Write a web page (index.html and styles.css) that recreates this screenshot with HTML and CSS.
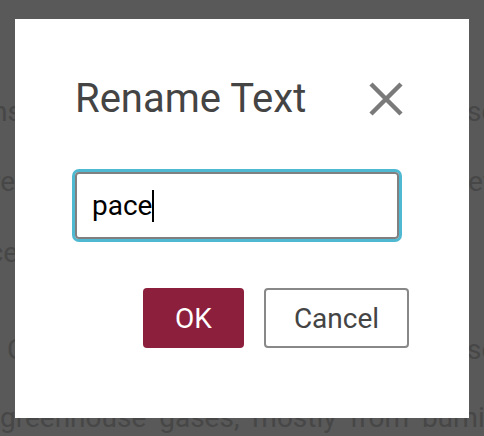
FILE: index.html
```html
<!DOCTYPE html>
<html lang="en">
<head>
<meta charset="utf-8">
<title>Rename Text</title>
<link rel="stylesheet" href="styles.css">
</head>
<body>
<div class="page">
  <div class="line line1"><span class="l l1">emissions</span><span class="r r1">scientists</span></div>
  <div class="line line2"><span class="l l2">are</span><span class="r r2">effects</span></div>
  <div class="line line3"><span class="l l3">since</span></div>
  <div class="line line4"><span class="l4">Climate change is</span><span class="r r4">scientific</span></div>
  <div class="line line5"><span class="full">greenhouse gases, mostly from burning fossil fuels</span></div>
</div>

<div class="dialog" role="dialog" aria-labelledby="dlg-title">
  <div class="head">
    <h2 class="title" id="dlg-title">Rename Text</h2>
    <button class="close" aria-label="Close">
      <svg width="34" height="34" viewBox="0 0 34 34" aria-hidden="true">
        <path d="M2 2 L32 32 M32 2 L2 32" stroke="#7a7a7a" stroke-width="4.5" fill="none"/>
      </svg>
    </button>
  </div>
  <div class="field" role="textbox" aria-label="Text name"><span class="value">pace</span><span class="caret"></span></div>
  <div class="actions">
    <button class="btn ok">OK</button>
    <button class="btn cancel">Cancel</button>
  </div>
</div>
</body>
</html>
```
FILE: styles.css
```css
html, body {
  margin: 0;
  padding: 0;
}
body {
  width: 484px;
  height: 436px;
  overflow: hidden;
  position: relative;
  background: #595959;
  font-family: Roboto, "Liberation Sans", Arial, sans-serif;
}
.page {
  padding-top: 96px;
  color: #474747;
  font-size: 28px;
  line-height: 32px;
}
.line {
  display: flex;
  overflow: hidden;
  white-space: nowrap;
  width: 484px;
}
.line2 { margin-top: 38px; }
.line3 { margin-top: 39px; }
.line4 { margin-top: 65px; }
.line5 { margin-top: 36px; }
.l {
  flex: none;
  display: flex;
  justify-content: flex-end;
}
.l1 { width: 22px; }
.l2 { width: 15px; }
.l3 { width: 18px; }
.r { flex: none; }
.r1 { margin-left: 445px; }
.r2 { margin-left: 453px; }
.l4 { flex: none; width: 460px; padding-left: 7px; overflow: hidden; }
.r4 { margin-left: 0; }
.full { word-spacing: 6px; }

.dialog {
  position: absolute;
  left: 15px;
  top: 19px;
  width: 454px;
  height: 399px;
  box-sizing: border-box;
  background: #fff;
  padding: 57px 60px 0 60px;
}
.head {
  display: flex;
  justify-content: space-between;
  align-items: center;
  height: 46px;
}
.title {
  margin: 0;
  font-size: 40px;
  line-height: 46px;
  font-weight: 400;
  color: #444;
}
.close {
  border: none;
  background: none;
  padding: 0;
  margin-right: 6px;
  width: 34px;
  height: 34px;
  display: flex;
}
.field {
  margin-top: 50px;
  width: 324px;
  height: 67px;
  box-sizing: border-box;
  border: 2px solid #808080;
  border-radius: 4px;
  box-shadow: 0 0 0 3px #4fb9d1;
  padding-left: 15px;
  display: flex;
  align-items: center;
  font-size: 28px;
  color: #000;
}
.caret {
  display: inline-block;
  width: 2px;
  height: 32px;
  background: #000;
  margin-left: 0;
}
.actions {
  margin-top: 49px;
  display: flex;
  justify-content: flex-end;
  gap: 20px;
}
.btn {
  height: 60px;
  padding: 0;
  font-family: inherit;
  font-size: 28px;
  border-radius: 4px;
  cursor: pointer;
}
.ok {
  width: 101px;
  background: #8c1f3c;
  color: #fff;
  border: none;
}
.cancel {
  width: 145px;
  background: #fff;
  border: 2px solid #888;
  color: #444;
}
```
